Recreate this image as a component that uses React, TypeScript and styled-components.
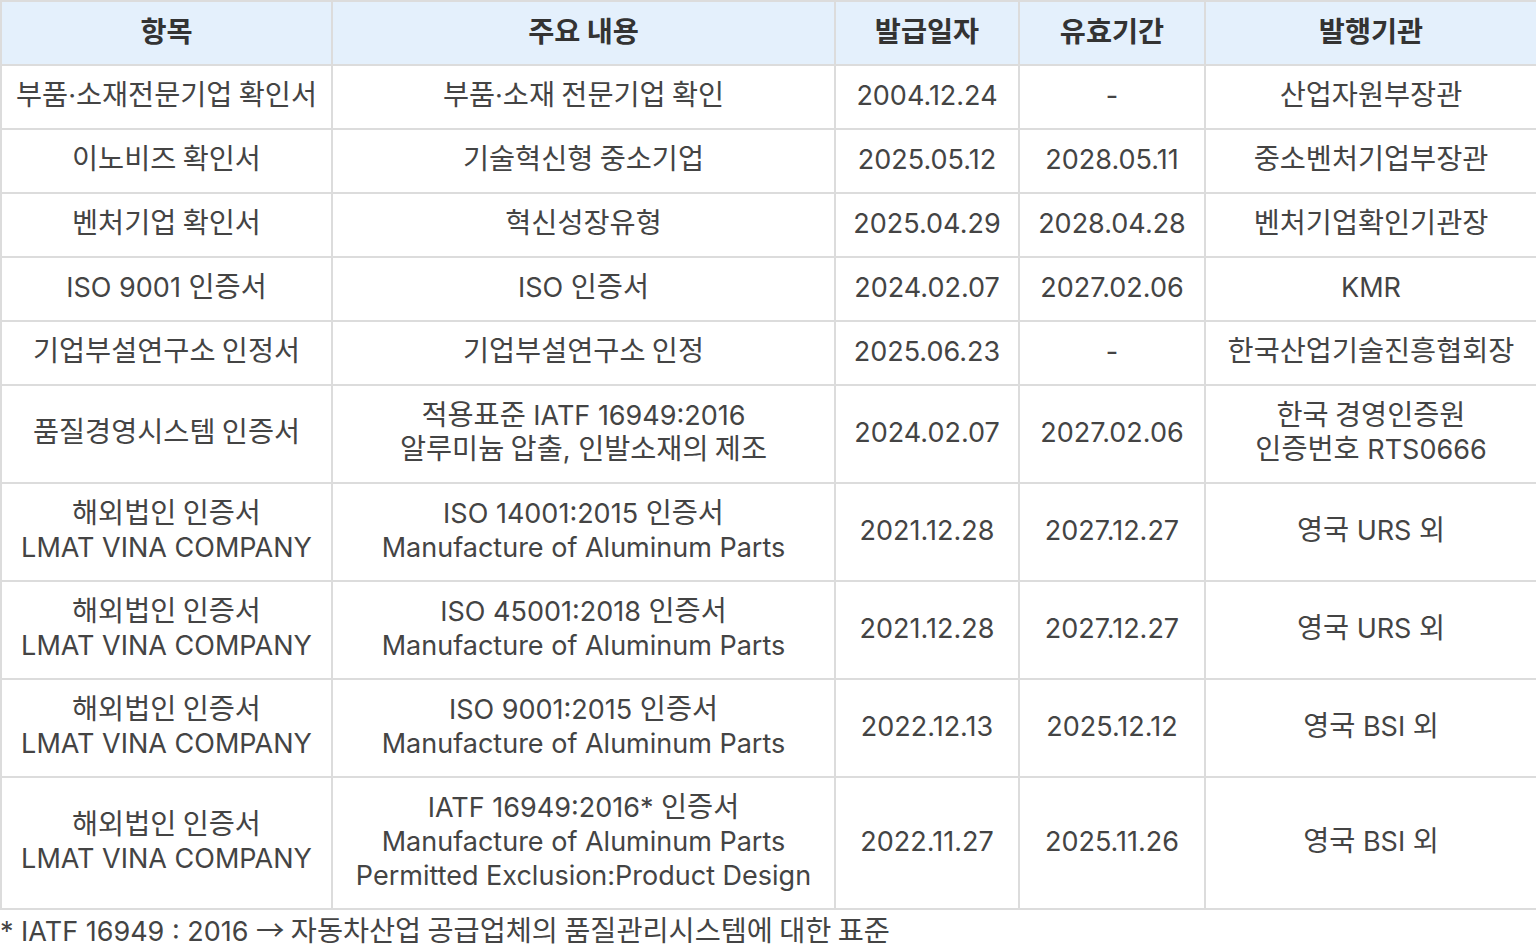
import React from 'react';
import styled, { createGlobalStyle } from 'styled-components';

const GlobalStyle = createGlobalStyle`
  html, body {
    margin: 0;
    padding: 0;
    background: #ffffff;
  }
  body {
    font-family: Inter, "Noto Sans CJK KR", sans-serif;
  }
`;

const Wrapper = styled.div`
  width: 1536px;
`;

const Table = styled.table`
  width: 1536px;
  border-collapse: collapse;
  table-layout: fixed;
  border: 2px solid #dcdcdc;
`;

const Col = styled.col<{ $width: number }>`
  width: ${(p) => p.$width}px;
`;

const HeadCell = styled.th`
  box-sizing: border-box;
  background: #e4f0fc;
  color: #333333;
  font-size: 27px;
  font-weight: 700;
  line-height: 34px;
  padding: 14px 0;
  border: 2px solid #dcdcdc;
  text-align: center;
`;

const Cell = styled.td`
  box-sizing: border-box;
  color: #444444;
  font-size: 27px;
  font-weight: 400;
  line-height: 34px;
  padding: 13px 0 15px;
  border: 2px solid #dcdcdc;
  text-align: center;
  vertical-align: middle;
  white-space: nowrap;
`;

// hangul runs are set a little larger than the latin text
const Hangul = styled.span`
  font-family: "Noto Sans CJK KR", sans-serif;
  font-size: 1.05em;
  line-height: 0;
`;

const Footnote = styled.p`
  margin: 5px 0 0;
  color: #444444;
  font-size: 27px;
  line-height: 34px;
`;

interface IRow {
  item: string[];
  content: string[];
  issued: string;
  valid: string;
  issuer: string[];
}

const columns = [
  { label: '항목', width: 331 },
  { label: '주요 내용', width: 503 },
  { label: '발급일자', width: 184 },
  { label: '유효기간', width: 186 },
  { label: '발행기관', width: 332 },
];

const vina = ['해외법인 인증서', 'LMAT VINA COMPANY'];

const rows: IRow[] = [
  {
    item: ['부품·소재전문기업 확인서'],
    content: ['부품·소재 전문기업 확인'],
    issued: '2004.12.24',
    valid: '-',
    issuer: ['산업자원부장관'],
  },
  {
    item: ['이노비즈 확인서'],
    content: ['기술혁신형 중소기업'],
    issued: '2025.05.12',
    valid: '2028.05.11',
    issuer: ['중소벤처기업부장관'],
  },
  {
    item: ['벤처기업 확인서'],
    content: ['혁신성장유형'],
    issued: '2025.04.29',
    valid: '2028.04.28',
    issuer: ['벤처기업확인기관장'],
  },
  {
    item: ['ISO 9001 인증서'],
    content: ['ISO 인증서'],
    issued: '2024.02.07',
    valid: '2027.02.06',
    issuer: ['KMR'],
  },
  {
    item: ['기업부설연구소 인정서'],
    content: ['기업부설연구소 인정'],
    issued: '2025.06.23',
    valid: '-',
    issuer: ['한국산업기술진흥협회장'],
  },
  {
    item: ['품질경영시스템 인증서'],
    content: ['적용표준 IATF 16949:2016', '알루미늄 압출, 인발소재의 제조'],
    issued: '2024.02.07',
    valid: '2027.02.06',
    issuer: ['한국 경영인증원', '인증번호 RTS0666'],
  },
  {
    item: vina,
    content: ['ISO 14001:2015 인증서', 'Manufacture of Aluminum Parts'],
    issued: '2021.12.28',
    valid: '2027.12.27',
    issuer: ['영국 URS 외'],
  },
  {
    item: vina,
    content: ['ISO 45001:2018 인증서', 'Manufacture of Aluminum Parts'],
    issued: '2021.12.28',
    valid: '2027.12.27',
    issuer: ['영국 URS 외'],
  },
  {
    item: vina,
    content: ['ISO 9001:2015 인증서', 'Manufacture of Aluminum Parts'],
    issued: '2022.12.13',
    valid: '2025.12.12',
    issuer: ['영국 BSI 외'],
  },
  {
    item: vina,
    content: [
      'IATF 16949:2016* 인증서',
      'Manufacture of Aluminum Parts',
      'Permitted Exclusion:Product Design',
    ],
    issued: '2022.11.27',
    valid: '2025.11.26',
    issuer: ['영국 BSI 외'],
  },
];

const HANGUL = /([\uAC00-\uD7A3\u2192]+(?: [\uAC00-\uD7A3]+)*)/;

const Text: React.FC<{ value: string }> = ({ value }) => (
  <>
    {value.split(HANGUL).map((part, i) =>
      i % 2 === 1 ? <Hangul key={i}>{part}</Hangul> : part
    )}
  </>
);

const Lines: React.FC<{ lines: string[] }> = ({ lines }) => (
  <>
    {lines.map((line, i) => (
      <React.Fragment key={i}>
        {i > 0 && <br />}
        <Text value={line} />
      </React.Fragment>
    ))}
  </>
);

const App: React.FC = () => {
  return (
    <Wrapper>
      <GlobalStyle />
      <Table>
        <colgroup>
          {columns.map((col) => (
            <Col key={col.label} $width={col.width} />
          ))}
        </colgroup>
        <thead>
          <tr>
            {columns.map((col) => (
              <HeadCell key={col.label}>
                <Text value={col.label} />
              </HeadCell>
            ))}
          </tr>
        </thead>
        <tbody>
          {rows.map((row, i) => (
            <tr key={i}>
              <Cell>
                <Lines lines={row.item} />
              </Cell>
              <Cell>
                <Lines lines={row.content} />
              </Cell>
              <Cell>{row.issued}</Cell>
              <Cell>{row.valid}</Cell>
              <Cell>
                <Lines lines={row.issuer} />
              </Cell>
            </tr>
          ))}
        </tbody>
      </Table>
      <Footnote>
        <Text value="* IATF 16949 : 2016 → 자동차산업 공급업체의 품질관리시스템에 대한 표준" />
      </Footnote>
    </Wrapper>
  );
};

export default App;
